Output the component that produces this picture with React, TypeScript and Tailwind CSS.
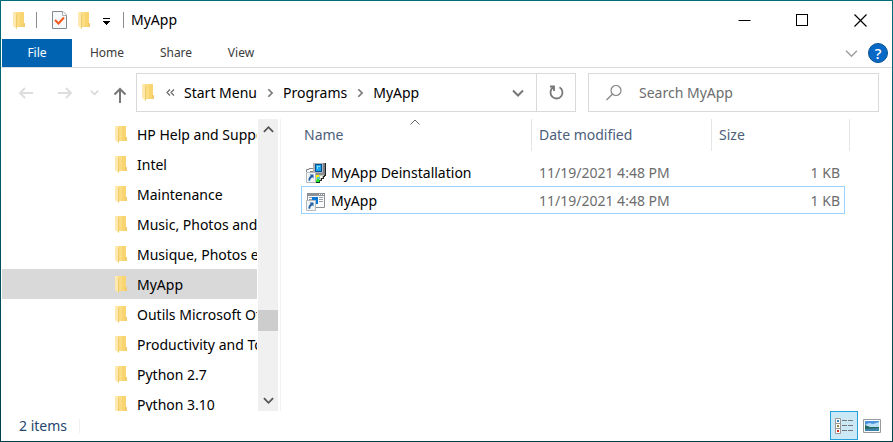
import React from "react";

function Folder() {
  return (
    <svg width="12" height="17" viewBox="0 0 12 17" className="shrink-0" aria-hidden="true">
      <path d="M2 0H11V11H12V15H4L2 13Z" fill="#fbdc83" />
      <path d="M7 0H11V11H12V15H7Z" fill="#f8d570" />
      <path d="M10 11H12V15H10Z" fill="#f0cc6c" />
      <path d="M0 0H2L4 2V17L0 14Z" fill="#ffe9ae" />
      <path d="M3.500 2V16.500" stroke="#f0cb6c" fill="none" />
    </svg>
  );
}

function Chevron({ kind = "down", color = "#666", size = 12, weight = 2 }: { kind?: "down" | "up" | "right"; color?: string; size?: number; weight?: number }) {
  const paths = { down: "M1 3.500L6 8.500L11 3.500", up: "M1 8.500L6 3.500L11 8.500", right: "M4 1.500L8.500 6L4 10.500" };
  return (
    <svg width={size} height={size} viewBox="0 0 12 12" fill="none" stroke={color} strokeWidth={weight} className="shrink-0" aria-hidden="true">
      <path d={paths[kind]} />
    </svg>
  );
}

function ShortcutArrow() {
  return (
    <>
      <path d="M0.500 9.500H9.500V19.500H0.500Z" fill="#f3f5f7" stroke="#b4babf" />
      <path d="M3.500 11.500H7.500V15.500L6.300 14.300C4.800 15.200 4.200 16 4.200 17.800H2.600C2.200 15.600 3 14 4.700 12.800Z" fill="#2161a3" />
    </>
  );
}

function UninstallIcon() {
  return (
    <svg width="20" height="20" viewBox="0 0 20 20" className="shrink-0" aria-hidden="true">
      <path d="M7 0H18V10H7Z" fill="#aeb2b6" />
      <path d="M17 0H20V12H17Z" fill="#7b7f83" />
      <path d="M19 0H20V13H19Z" fill="#222" />
      <path d="M9 1H16V9H9Z" fill="#064f91" />
      <path d="M10 2H15V8H10Z" fill="#19a4ef" />
      <path d="M11 3H14V4H12V6H11Z" fill="#7fe0ff" />
      <path d="M8 10H18V12H8Z" fill="#8b8e91" />
      <path d="M10 12H19V13H18V16H16V17H14V19H10Z" fill="#c4c9b6" />
      <path d="M18 12H19V14H18V16H16V18H14V20H10V19H13V17H15V15H17V13H18Z" fill="#222" />
      <path d="M0.500 9V6.500H3V5.500H7M4 8.500H7" fill="none" stroke="#858585" />
      <path d="M10 12H13V15H10Z" fill="#fff200" />
      <path d="M10 18L12 15L14 18L13 19H10Z" fill="#17ec27" />
      <path d="M11 14H14V16H11Z" fill="#47ced1" />
      <path d="M14 13H16V15H14Z" fill="#f5f7e8" />
      <ShortcutArrow />
    </svg>
  );
}

function ProgramIcon() {
  return (
    <svg width="20" height="20" viewBox="0 0 20 20" className="shrink-0" aria-hidden="true">
      <path d="M1.500 2.500H18.500V16.500H1.500Z" fill="#fafafa" stroke="#8b9197" />
      <path d="M1 2H19V5H1Z" fill="#8b9197" />
      <path d="M13 3H14V4H13ZM15 3H16V4H15ZM17 3H18V4H17Z" fill="#fff" />
      <path d="M3 6.500H6M3 8.500H6" stroke="#9aa0a5" />
      <path d="M6 6H12V13H6Z" fill="#0878d8" />
      <path d="M13 6.500H17M13 8.500H17M13 10.500H17" stroke="#9aa0a5" />
      <ShortcutArrow />
    </svg>
  );
}

const folders = [
  "HP Help and Support", "Intel", "Maintenance", "Music, Photos and Videos", "Musique, Photos et vidéos",
  "MyApp", "Outils Microsoft Office", "Productivity and Tools", "Python 2.7", "Python 3.10",
];

const files = [
  { name: "MyApp Deinstallation", date: "11/19/2021 4:48 PM", size: "1 KB", icon: <UninstallIcon />, focused: false },
  { name: "MyApp", date: "11/19/2021 4:48 PM", size: "1 KB", icon: <ProgramIcon />, focused: true },
];

function TitleBar() {
  return (
    <header className="flex h-[38px] shrink-0 items-center">
      <div className="flex items-center pl-3">
        <Folder />
        <span className="ml-[11px] h-4 w-px bg-[#8c8c8c]" />
        <button aria-label="Properties" className="ml-[15px]">
          <svg width="15" height="18" viewBox="0 0 15 18" aria-hidden="true">
            <path d="M0.500 0.500H11L14.500 4V17.500H0.500Z" fill="#f6f8fa" stroke="#858b91" />
            <path d="M10.500 0.500V4.500H14.500" fill="#fff" stroke="#a5abb0" />
            <path d="M3 9L6.500 12.500L12 6.500" fill="none" stroke="#f05a1e" strokeWidth="2" />
          </svg>
        </button>
        <button aria-label="New folder" className="ml-[11px]"><Folder /></button>
        <button aria-label="Customize Quick Access Toolbar" className="ml-3 pt-1">
          <svg width="8" height="8" viewBox="0 0 8 8" aria-hidden="true">
            <path d="M1 0H8V1H1ZM1 3H8V4H7V5H6V6H5V7H4V6H3V5H2V4H1Z" fill="#000" />
          </svg>
        </button>
        <span className="ml-[13px] h-4 w-px bg-[#8c8c8c]" />
      </div>
      <h1 className="ml-[7px] flex-1">MyApp</h1>
      <div className="flex h-full pr-[3px]">
        <button aria-label="Minimize" className="grid w-[58px] place-items-center">
          <svg width="13" height="13" viewBox="0 0 13 13" aria-hidden="true"><path d="M0.500 6.500H12.500" stroke="#000" /></svg>
        </button>
        <button aria-label="Maximize" className="grid w-[58px] place-items-center">
          <svg width="13" height="13" viewBox="0 0 13 13" aria-hidden="true"><path d="M0.500 0.500H11.500V11.500H0.500Z" fill="none" stroke="#000" shapeRendering="crispEdges" /></svg>
        </button>
        <button aria-label="Close" className="grid w-[58px] place-items-center">
          <svg width="13" height="13" viewBox="0 0 13 13" aria-hidden="true"><path d="M0.500 0.500L12.500 12.500M12.500 0.500L0.500 12.500" stroke="#000" strokeWidth="1.200" /></svg>
        </button>
      </div>
    </header>
  );
}

function Ribbon() {
  return (
    <nav className="flex h-[29px] shrink-0 items-stretch border-b border-[#dadbdc] pl-px text-[12px] text-[#3b3b3b]">
      <button className="w-[70px] bg-[#0063b1] text-white">File</button>
      <button className="w-[70px]">Home</button>
      <button className="w-[68px]">Share</button>
      <button className="w-[62px]">View</button>
      <div className="ml-auto flex items-center gap-2.5 pr-1">
        <button aria-label="Minimize the Ribbon"><Chevron color="#a0a0a0" weight={1.5} size={13} /></button>
        <button aria-label="Help" className="grid size-5 place-items-center rounded-full border border-[#07508f] bg-[#0868c5] text-[15px] leading-4 font-medium text-white">?</button>
      </div>
    </nav>
  );
}

function AddressBar() {
  return (
    <div className="flex shrink-0 items-center pt-[5px] pr-[13px] pb-[7px]">
      <div className="flex w-[135px] shrink-0 items-center pl-[17px]">
        <button aria-label="Back">
          <svg width="16" height="14" viewBox="0 0 16 14" fill="none" stroke="#dedede" strokeWidth="2" aria-hidden="true"><path d="M15 7H2M7 2L2 7L7 12" /></svg>
        </button>
        <button aria-label="Forward" className="ml-[23px]">
          <svg width="16" height="14" viewBox="0 0 16 14" fill="none" stroke="#dedede" strokeWidth="2" aria-hidden="true"><path d="M1 7H14M9 2L14 7L9 12" /></svg>
        </button>
        <button aria-label="Recent locations" className="ml-[17px]"><Chevron color="#d8d8d8" size={9} /></button>
        <button aria-label="Up" className="ml-[14px] pt-1">
          <svg width="14" height="16" viewBox="0 0 14 16" fill="none" stroke="#777" strokeWidth="2" aria-hidden="true"><path d="M7 16V2M1.500 7.500L7 2L12.500 7.500" /></svg>
        </button>
      </div>
      <div className="flex h-[39px] min-w-0 flex-1 border border-[#d9d9d9]">
        <div className="flex min-w-0 flex-1 items-center whitespace-nowrap pl-[5px]">
          <Folder />
          <svg width="9" height="7" viewBox="0 0 9 7" fill="none" stroke="#666" strokeWidth="1.200" className="ml-3 shrink-0" aria-hidden="true"><path d="M4 0.500L1 3.500L4 6.500M8 0.500L5 3.500L8 6.500" /></svg>
          <button className="ml-[9px]">Start Menu</button>
          <span className="ml-2"><Chevron kind="right" size={10} color="#777" /></span>
          <button className="ml-2">Programs</button>
          <span className="ml-2"><Chevron kind="right" size={10} color="#777" /></span>
          <button className="ml-2">MyApp</button>
          <button aria-label="Previous locations" className="mr-3 ml-auto"><Chevron color="#777" size={12} /></button>
        </div>
        <button aria-label="Refresh" className="grid w-[39px] shrink-0 place-items-center border-l border-[#d9d9d9]">
          <svg width="15" height="15" viewBox="0 0 15 15" fill="none" stroke="#777" strokeWidth="1.800" aria-hidden="true"><path d="M10.500 2.300A6 6 0 1 1 4 2.600M1 1.500H5V6" /></svg>
        </button>
      </div>
      <label className="ml-3 flex h-[39px] w-[291px] items-center border border-[#d9d9d9] pl-[17px]">
        <svg width="16" height="16" viewBox="0 0 16 16" fill="none" stroke="#858585" strokeWidth="1.200" className="shrink-0" aria-hidden="true"><circle cx="10" cy="5.500" r="5" /><path d="M6.500 9L0.500 15" /></svg>
        <input type="search" aria-label="Search MyApp" placeholder="Search MyApp" className="ml-[17px] min-w-0 flex-1 outline-none placeholder:text-[#6d6d6d]" />
      </label>
    </div>
  );
}

function FolderTree() {
  return (
    <aside className="flex w-[277px] shrink-0">
      <ul className="min-w-0 flex-1 overflow-hidden pl-px">
        {folders.map((name) => (
          <li key={name}>
            <button className={`flex h-[30px] w-full items-center gap-2.5 overflow-hidden whitespace-nowrap pt-px pl-[113px] ${name === "MyApp" ? "bg-[#d9d9d9]" : ""}`}>
              <Folder />
              {name}
            </button>
          </li>
        ))}
      </ul>
      <div className="ml-px flex w-5 flex-col items-center bg-[#f0f0f0]">
        <button aria-label="Scroll up" className="grid h-[21px] w-full place-items-center"><Chevron kind="up" size={11} color="#555" /></button>
        <div className="flex-[170]" />
        <div className="h-[21px] w-full bg-[#cdcdcd]" />
        <div className="flex-[59]" />
        <button aria-label="Scroll down" className="grid h-[21px] w-full place-items-center"><Chevron size={11} color="#555" /></button>
      </div>
    </aside>
  );
}

function FileList() {
  return (
    <main className="ml-0.5 min-w-0 flex-1 overflow-hidden border-l border-[#f2f2f2] pl-5">
      <table className="w-full max-w-[549px] table-fixed border-separate border-spacing-0">
        <colgroup>
          <col className="w-[231px]" />
          <col className="w-[180px]" />
          <col />
        </colgroup>
        <thead>
          <tr className="h-8 text-left text-[#4c607a]">
            <th className="relative border-r border-[#e5e5e5] p-0 pl-[3px] font-normal">
              Name
              <svg width="10" height="6" viewBox="0 0 10 6" fill="none" stroke="#666" className="absolute top-0 left-[109px]" aria-hidden="true"><path d="M0.500 5.500L5 1L9.500 5.500" /></svg>
            </th>
            <th className="border-r border-[#e5e5e5] p-0 pl-[7px] font-normal">Date modified</th>
            <th className="border-r border-[#e5e5e5] p-0 pl-[7px] font-normal">Size</th>
          </tr>
        </thead>
        <tbody className="before:block before:h-2">
          {files.map((file) => {
            const edge = file.focused ? "h-7 border-[#99d1ff]" : "h-[27px] border-transparent";
            return (
              <tr key={file.name}>
                <td className="p-0">
                  <div className={`flex items-center gap-[5px] border-y border-l pt-px pl-1 ${edge}`}>{file.icon}{file.name}</div>
                </td>
                <td className="p-0 text-[#6d6d6d]">
                  <div className={`flex items-center border-y pt-px pl-[7px] ${edge}`}>{file.date}</div>
                </td>
                <td className="p-0 text-[#6d6d6d]">
                  <div className={`mr-[5px] flex items-center justify-end border-y border-r pt-px pr-1 ${edge}`}>{file.size}</div>
                </td>
              </tr>
            );
          })}
        </tbody>
      </table>
    </main>
  );
}

function StatusBar() {
  return (
    <footer className="flex h-[30px] shrink-0 items-center pl-[18px] text-[#26476d]">
      <span>2 items</span>
      <span className="ml-3 h-3.5 w-px bg-[#f0f0f0]" />
      <div className="ml-auto flex items-center self-stretch pr-[11px]">
        <button aria-label="Details view" className="mr-[5px] grid h-[29px] w-7 place-items-center self-start border border-[#26a0da] bg-[#cbe8f6]">
          <svg width="18" height="16" viewBox="0 0 18 16" aria-hidden="true">
            <path d="M0.500 0.500H5.500V15.500H0.500ZM0.500 5.500H5.500M0.500 10.500H5.500" fill="#fff" stroke="#999" />
            <path d="M7 2H12V3H7ZM13 2H18V3H13ZM7 7H12V8H7ZM13 7H18V8H13ZM7 12H12V13H7ZM13 12H18V13H13Z" fill="#777" />
            <path d="M2 2H4V4H2Z" fill="#3683bd" /><path d="M2 7H4V9H2Z" fill="#8c8540" /><path d="M2 12H4V14H2Z" fill="#cf2d20" />
          </svg>
        </button>
        <button aria-label="Large icons view">
          <svg width="18" height="14" viewBox="0 0 18 14" aria-hidden="true">
            <path d="M0.500 0.500H17.500V13.500H0.500Z" fill="#fff" stroke="#999" />
            <path d="M2 2H16V12H2Z" fill="#4a94df" />
            <path d="M2 6L6 4L10 5L16 3V8H2Z" fill="#b9def5" />
            <path d="M2 6L7 8L16 8V10H2Z" fill="#28695d" />
            <path d="M2 10L16 9V12H2Z" fill="#3e83ae" />
          </svg>
        </button>
      </div>
    </footer>
  );
}

export default function App() {
  return (
    <div className="h-screen bg-linear-to-b from-[#006d7a] to-[#003f4f] p-px font-['Noto_Sans','Open_Sans',sans-serif] text-[14px] leading-5 text-black">
      <div className="flex h-full flex-col bg-white">
        <TitleBar />
        <Ribbon />
        <AddressBar />
        <div className="flex min-h-0 flex-1">
          <FolderTree />
          <FileList />
        </div>
        <StatusBar />
      </div>
    </div>
  );
}
